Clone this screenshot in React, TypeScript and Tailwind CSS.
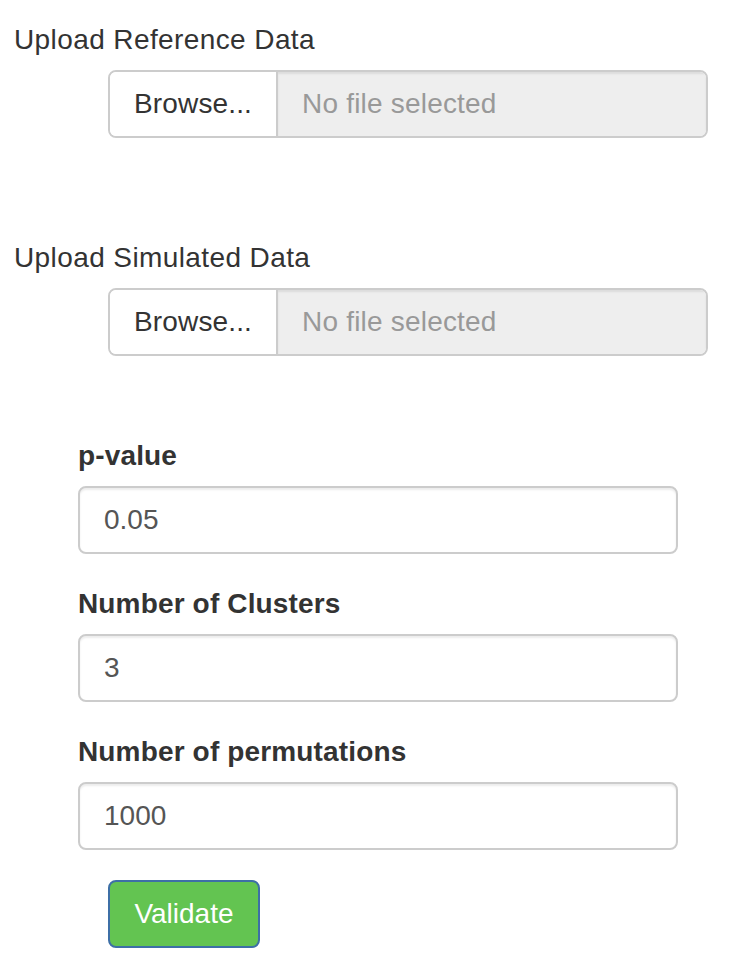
import React from "react";

const fileInputs = ["Upload Reference Data", "Upload Simulated Data"];

const numberInputs = [
  { label: "p-value", value: "0.05" },
  { label: "Number of Clusters", value: "3" },
  { label: "Number of permutations", value: "1000" },
];

function FileInput({ label, first }: { label: string; first?: boolean }) {
  return (
    <div className={first ? "" : "mt-[100px]"}>
      <div className="mb-[10px] tracking-[0.4px]">{label}</div>
      <div className="ml-[94px] flex h-[68px] w-[600px] overflow-hidden rounded-[8px] border-2 border-[#ccc]">
        <div className="flex w-[168px] items-center border-r-2 border-[#ccc] bg-white px-[24px] text-[#333] tracking-[0.15px]">
          Browse...
        </div>
        <div className="flex flex-1 items-center bg-[#eee] px-[24px] text-[#999] tracking-[0.2px] shadow-[inset_0_2px_2px_rgba(0,0,0,0.075)]">
          No file selected
        </div>
      </div>
    </div>
  );
}

export default function App() {
  return (
    <div className="min-h-[968px] bg-white pt-[20px] pl-[14px] font-['Liberation_Sans',Arial,sans-serif] text-[28px] leading-[40px] text-[#333]">
      {fileInputs.map((label, i) => (
        <FileInput key={label} label={label} first={i === 0} />
      ))}

      <div className="ml-[64px] mt-[80px]">
        {numberInputs.map((f, i) => (
          <div key={f.label} className={i === 0 ? "" : "mt-[30px]"}>
            <div className="mb-[10px] font-bold tracking-[0.15px]">{f.label}</div>
            <div className="flex h-[68px] w-[600px] items-center rounded-[8px] border-2 border-[#ccc] bg-white px-[24px] text-[#555] shadow-[inset_0_2px_2px_rgba(0,0,0,0.075)]">
              {f.value}
            </div>
          </div>
        ))}

        <button className="ml-[30px] mt-[30px] flex h-[68px] w-[152px] items-center justify-center rounded-[8px] border-2 border-[#3d6fa6] bg-[#63c451] text-white">
          Validate
        </button>
      </div>
    </div>
  );
}
